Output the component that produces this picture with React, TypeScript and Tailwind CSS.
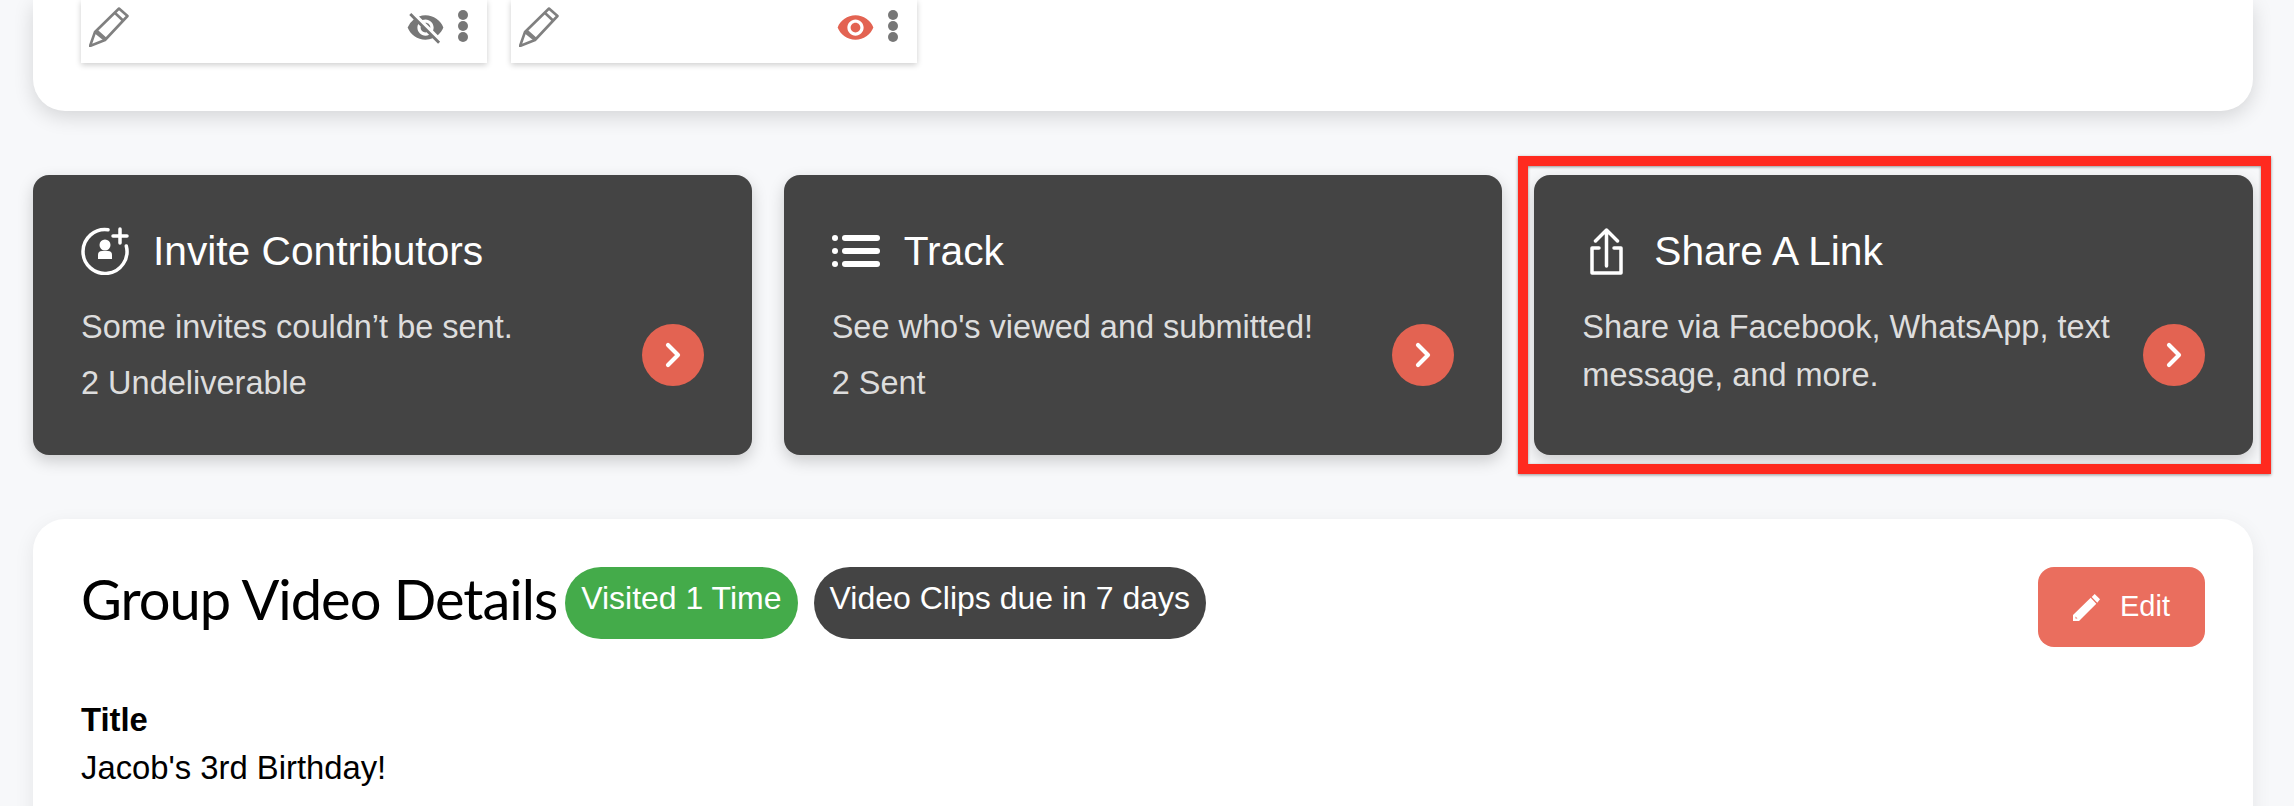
import { MdVisibility, MdVisibilityOff } from "react-icons/md";
import { LuChevronRight } from "react-icons/lu";

const Pencil = () => (
  <svg viewBox="0 0 40 40" className="w-10 h-10 text-[#808080]" fill="none" stroke="currentColor" strokeWidth="2.6" strokeLinejoin="round">
    <path d="M1 39 L6 25 L30 1.5 L38.5 9 L16 33 Z" />
    <path d="M25.5 5.5 L34 13.5 M6 25 L16 33 M8 24 L17 32" />
  </svg>
);

const Dots = () => (
  <svg viewBox="0 0 10 32" className="w-2.5 h-8 text-[#777] mt-2.5" fill="currentColor">
    <circle cx="5" cy="5" r="5" />
    <circle cx="5" cy="16" r="5" />
    <circle cx="5" cy="27" r="5" />
  </svg>
);

const InviteIcon = () => (
  <svg viewBox="0 0 48 48" className="w-12 h-12 text-white shrink-0" fill="none" stroke="currentColor" strokeWidth="3.5" strokeLinecap="round">
    <path d="M27 2.7 A22 22 0 1 0 45.3 19" />
    <path d="M39 2 V16 M32 9 H46" />
    <circle cx="24" cy="18" r="5.5" fill="currentColor" stroke="none" />
    <path d="M17 32 V28 Q17 24 21 24 H27 Q31 24 31 28 V32 Z" fill="currentColor" stroke="none" />
  </svg>
);

const TrackIcon = () => (
  <svg viewBox="0 0 48 48" className="w-12 h-12 text-white shrink-0" fill="currentColor">
    <circle cx="3" cy="11" r="3" />
    <circle cx="3" cy="24" r="3" />
    <circle cx="3" cy="37" r="3" />
    <rect x="10" y="8" width="38" height="6" rx="3" />
    <rect x="10" y="21" width="38" height="6" rx="3" />
    <rect x="10" y="34" width="38" height="6" rx="3" />
  </svg>
);

const ShareIcon = () => (
  <svg viewBox="0 0 48 48" className="w-12 h-12 text-white shrink-0" fill="none" stroke="currentColor" strokeWidth="3.5" strokeLinecap="round" strokeLinejoin="round">
    <path d="M24.5 39 V3 M13.5 14 L24.5 3 L35.5 14" />
    <path d="M17 21 H10 V46 H39 V21 H32" />
  </svg>
);

const EditIcon = () => (
  <svg viewBox="0 0 27 27" className="w-[27px] h-[27px] shrink-0" fill="currentColor">
    <path fillRule="evenodd" d="M0 21 L17.7 3.7 L23.3 9.7 L6 27 H0 Z M2.5 22.5 V24.5 H4.5 Z" />
    <path d="M18.7 3 L21.7 0 L27 5.3 L24.3 8.7 Z" />
  </svg>
);

const Arrow = () => (
  <div className="w-[62px] h-[62px] rounded-full bg-[#e36352] flex items-center justify-center shrink-0">
    <LuChevronRight className="w-10 h-10 text-white" strokeWidth={2.5} />
  </div>
);

const SmallCard = ({ red }: { red?: boolean }) => (
  <div className="w-[406px] h-[63px] bg-white shadow-[0_2px_6px_rgba(0,0,0,0.2)] pl-2 pr-[19px] flex items-start justify-between">
    <div className="pt-[7px]">
      <Pencil />
    </div>
    <div className="flex items-start gap-[13px]">
      {red ? (
        <MdVisibility className="w-[39px] h-[39px] text-[#e36352] mt-2" />
      ) : (
        <MdVisibilityOff className="w-[39px] h-[39px] text-[#777] mt-2" />
      )}
      <Dots />
    </div>
  </div>
);

const ActionCard = ({ icon, title, children }: { icon: React.ReactNode; title: string; children: React.ReactNode }) => (
  <div className="h-[280px] bg-[#444] rounded-2xl shadow-[0_6px_16px_rgba(0,0,0,0.18)] pt-12 px-12">
    <div className="flex items-center gap-6 h-14">
      {icon}
      <h2 className="text-[40.7px] leading-[56px] text-white">{title}</h2>
    </div>
    <div className="flex items-center justify-between mt-5 h-[112px]">
      <div className="text-[32.5px] text-[#ddd]">{children}</div>
      <Arrow />
    </div>
  </div>
);

export default function App() {
  return (
    <div className="h-[806px] overflow-hidden bg-[#f7f8fa] pl-[33px] pr-[41px] font-['Liberation_Sans',Arial,sans-serif] relative">
      {/* Top card, cut off by the viewport */}
      <div className="h-[111px] bg-white rounded-b-[32px] shadow-[0_6px_20px_rgba(0,0,0,0.14)] pl-12 flex gap-6 items-start">
        <SmallCard />
        <SmallCard red />
      </div>

      <div className="grid grid-cols-3 gap-8 mt-16">
        <ActionCard icon={<InviteIcon />} title="Invite Contributors">
          <p className="leading-[56px]">Some invites couldn’t be sent.</p>
          <p className="leading-[56px]">2 Undeliverable</p>
        </ActionCard>
        <ActionCard icon={<TrackIcon />} title="Track">
          <p className="leading-[56px]">See who's viewed and submitted!</p>
          <p className="leading-[56px]">2 Sent</p>
        </ActionCard>
        <ActionCard icon={<ShareIcon />} title="Share A Link">
          <p className="leading-[48px] w-[560px] -mt-2">Share via Facebook, WhatsApp, text message, and more.</p>
        </ActionCard>
      </div>

      {/* Red highlight round the third card */}
      <div className="absolute left-[1518px] top-[156px] w-[753px] h-[318px] border-[10px] border-[#ff2a1f] shadow-[0_1px_3px_rgba(0,0,0,0.4),inset_0_1px_3px_rgba(0,0,0,0.4)]" />

      <div className="mt-16 bg-white rounded-t-[32px] shadow-[0_6px_20px_rgba(0,0,0,0.08)] px-12 pt-12 h-[400px]">
        <div className="flex items-start justify-between">
          <div className="flex items-center gap-4">
            <h1 className="text-[56px] leading-[64px] pb-2 font-['Lato',sans-serif] font-normal tracking-[-1px] text-black mr-[-8px]">Group Video Details</h1>
            <span className="h-[72px] px-4 pt-[9px] rounded-[36px] bg-[#44ab4a] text-white text-[32px] leading-[44px]">Visited 1 Time</span>
            <span className="h-[72px] px-4 pt-[9px] rounded-[36px] bg-[#444] text-white text-[32px] leading-[44px]">Video Clips due in 7 days</span>
          </div>
          <button className="w-[167px] h-20 rounded-2xl bg-[#ea6e5e] text-white text-[29px] flex items-center justify-center gap-5">
            <EditIcon />
            Edit
          </button>
        </div>
        <p className="text-[32.8px] leading-[48px] font-bold text-black mt-[49px]">Title</p>
        <p className="text-[32.8px] leading-[48px] text-black">Jacob's 3rd Birthday!</p>
      </div>
    </div>
  );
}
